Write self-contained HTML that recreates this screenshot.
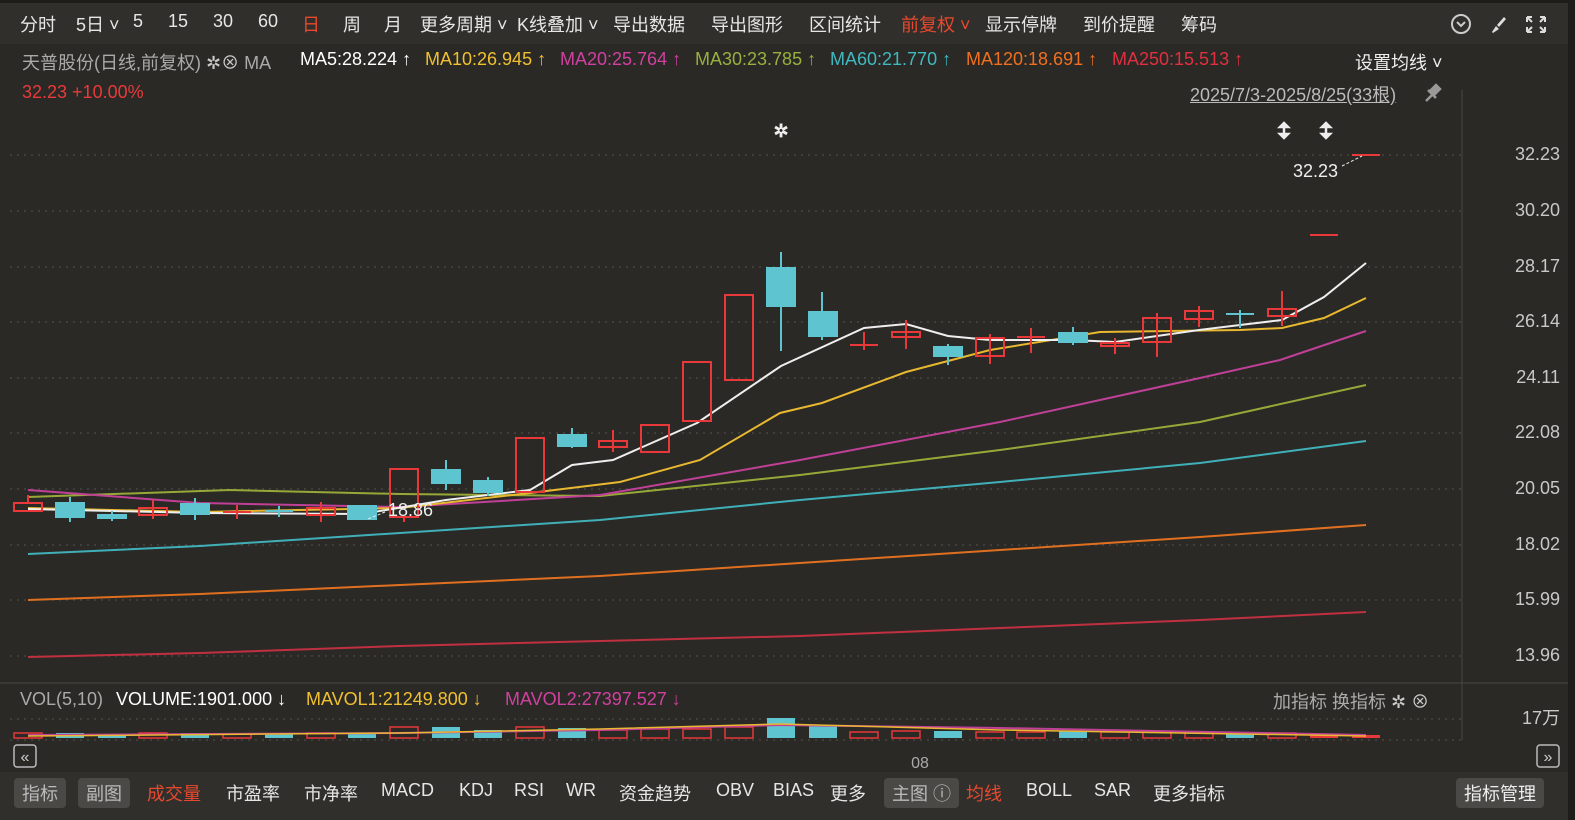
<!DOCTYPE html>
<html><head><meta charset="utf-8">
<style>
*{margin:0;padding:0;box-sizing:border-box}
body{width:1575px;height:820px;background:#2a2925;overflow:hidden;font-family:"Liberation Sans","Noto Sans CJK SC",sans-serif;position:relative;color:#ddd}
.top{position:absolute;left:0;top:0;width:1568px;height:44px;background:#302f2b;border-top:3px solid #1e1d1a}
.top span{position:absolute;top:8px;font-size:18px;color:#e6e6e6;white-space:nowrap}
.t{position:absolute;white-space:nowrap;font-size:18px}
.bot{position:absolute;left:0;top:772px;width:1568px;height:48px;background:#302f2b}
.bot span{position:absolute;top:8px;font-size:18px;color:#e6e6e6;white-space:nowrap}
.btn{background:#4a4945;border-radius:4px;padding:2px 8px;color:#bbb!important}
.rb{position:absolute;right:0;top:0;width:7px;height:820px;background:#1e1d1a}
</style></head><body>
<div class="top">
<span style="left:20px">分时</span><span style="left:76px">5日 ˅</span><span style="left:133px">5</span><span style="left:168px">15</span><span style="left:213px">30</span><span style="left:258px">60</span><span style="left:302px;color:#e8492e">日</span><span style="left:343px">周</span><span style="left:384px">月</span><span style="left:420px">更多周期 ˅</span><span style="left:517px">K线叠加 ˅</span><span style="left:613px">导出数据</span><span style="left:711px">导出图形</span><span style="left:809px">区间统计</span><span style="left:901px;color:#e8492e">前复权 ˅</span><span style="left:985px">显示停牌</span><span style="left:1083px">到价提醒</span><span style="left:1181px">筹码</span>
<svg style="position:absolute;left:1450px;top:9px" width="100" height="24"><circle cx="11" cy="12" r="9" stroke="#ccc" stroke-width="2" fill="none"/><path d="M7 10l4 4 4-4" stroke="#ccc" stroke-width="2" fill="none"/><path d="M42 20l4-6 3 3-6 4z M47 13l7-8 2 2-7 8z" fill="#ddd"/><path d="M77 5h5M77 5v5M95 5h-5M95 5v5M77 20h5M77 20v-5M95 20h-5M95 20v-5M78 6l4 4M94 6l-4 4M78 19l4-4M94 19l-4-4" stroke="#ddd" stroke-width="2"/></svg>
</div>
<div class="t" style="left:22px;top:49px;color:#aaa">天普股份(日线,前复权) <span style="color:#ccc">✲⊗</span> MA</div>
<div class="t" style="left:300px;top:49px;color:#fff">MA5:28.224 ↑</div>
<div class="t" style="left:425px;top:49px;color:#f0c030">MA10:26.945 ↑</div>
<div class="t" style="left:560px;top:49px;color:#d040a0">MA20:25.764 ↑</div>
<div class="t" style="left:695px;top:49px;color:#98b040">MA30:23.785 ↑</div>
<div class="t" style="left:830px;top:49px;color:#40b8c0">MA60:21.770 ↑</div>
<div class="t" style="left:966px;top:49px;color:#f07020">MA120:18.691 ↑</div>
<div class="t" style="left:1112px;top:49px;color:#e03040">MA250:15.513 ↑</div>
<div class="t" style="left:1355px;top:49px;color:#eee">设置均线 ˅</div>
<div class="t" style="left:22px;top:82px;color:#e83a3a">32.23 +10.00%</div>
<div class="t" style="left:1190px;top:81px;color:#bbb;text-decoration:underline">2025/7/3-2025/8/25(33根)</div>
<svg style="position:absolute;left:1422px;top:83px" width="20" height="20"><path d="M4 18l6-6M8 8l6-6 4 4-6 6z M6 7l8 8" stroke="#999" stroke-width="2.5" fill="#999"/></svg>
<svg style="position:absolute;left:0;top:0" width="1575" height="820">
<g stroke="#55544e" stroke-dasharray="2 5" stroke-width="1">
<line x1="10" y1="155" x2="1462" y2="155"/><line x1="10" y1="211" x2="1462" y2="211"/><line x1="10" y1="267" x2="1462" y2="267"/><line x1="10" y1="322" x2="1462" y2="322"/><line x1="10" y1="378" x2="1462" y2="378"/><line x1="10" y1="433" x2="1462" y2="433"/><line x1="10" y1="489" x2="1462" y2="489"/><line x1="10" y1="545" x2="1462" y2="545"/><line x1="10" y1="600" x2="1462" y2="600"/><line x1="10" y1="656" x2="1462" y2="656"/>
<line x1="10" y1="719" x2="1462" y2="719"/><line x1="10" y1="740" x2="1462" y2="740"/>
</g>
<line x1="1462" y1="90" x2="1462" y2="740" stroke="#48473f"/>
<line x1="0" y1="683" x2="1568" y2="683" stroke="#48473f"/>
<g font-size="18" fill="#c8c8c8" text-anchor="end"><text x="1560" y="160">32.23</text><text x="1560" y="216">30.20</text><text x="1560" y="272">28.17</text><text x="1560" y="327">26.14</text><text x="1560" y="383">24.11</text><text x="1560" y="438">22.08</text><text x="1560" y="494">20.05</text><text x="1560" y="550">18.02</text><text x="1560" y="605">15.99</text><text x="1560" y="661">13.96</text><text x="1560" y="724">17万</text></g>
<g fill="none" stroke-width="2">
<polyline stroke="#c03040" points="28,657 200,653 400,646 600,641 800,636 1000,628 1200,620 1366,612"/>
<polyline stroke="#e07020" points="28,600 200,594 400,585 600,576 800,563 1000,550 1200,537 1366,525"/>
<polyline stroke="#40b0b8" points="28,554 200,546 400,533 600,520 800,500 1000,482 1200,463 1366,441"/>
<polyline stroke="#98a838" points="28,497 230,490 400,494 600,496 800,475 1000,450 1200,422 1366,385"/>
<polyline stroke="#c04098" points="28,490 200,503 400,507 600,495 800,460 1000,422 1200,378 1280,360 1366,331"/>
<polyline stroke="#e8b830" points="28,508 200,512 400,508 530,493 620,482 700,460 780,413 822,403 906,372 990,350 1100,332 1240,330 1282,328 1324,318 1366,298"/>
<polyline stroke="#eeeeee" points="28,509 200,513 362,514 446,500 530,490 572,465 613,460 697,423 781,366 864,328 906,324 948,336 990,340 1073,340 1115,342 1199,330 1240,325 1282,320 1324,297 1366,263"/>
</g>
<g stroke="#e8383a" stroke-width="2" fill="none">
<rect x="14" y="503" width="28" height="8"/><line x1="28" y1="495" x2="28" y2="503"/>
<rect x="139" y="508" width="28" height="7"/><line x1="153" y1="500" x2="153" y2="519"/>
<line x1="223" y1="512" x2="251" y2="512"/><line x1="237" y1="505" x2="237" y2="519"/>
<rect x="307" y="508" width="28" height="7"/><line x1="321" y1="502" x2="321" y2="522"/>
<rect x="390" y="469" width="28" height="48"/><line x1="404" y1="517" x2="404" y2="522"/>
<rect x="516" y="438" width="28" height="54"/>
<rect x="599" y="441" width="28" height="6"/><line x1="613" y1="430" x2="613" y2="452"/>
<rect x="641" y="425" width="28" height="27"/>
<rect x="683" y="362" width="28" height="59"/>
<rect x="725" y="295" width="28" height="85"/>
<line x1="850" y1="345" x2="878" y2="345"/><line x1="864" y1="332" x2="864" y2="350"/>
<rect x="892" y="332" width="28" height="5"/><line x1="906" y1="320" x2="906" y2="349"/>
<rect x="976" y="338" width="28" height="18"/><line x1="990" y1="334" x2="990" y2="364"/>
<line x1="1017" y1="337" x2="1045" y2="337"/><line x1="1031" y1="328" x2="1031" y2="353"/>
<rect x="1101" y="343" width="28" height="3"/><line x1="1115" y1="338" x2="1115" y2="354"/>
<rect x="1143" y="318" width="28" height="24"/><line x1="1157" y1="313" x2="1157" y2="357"/>
<rect x="1185" y="311" width="28" height="8"/><line x1="1199" y1="306" x2="1199" y2="327"/>
<rect x="1268" y="309" width="28" height="7"/><line x1="1282" y1="291" x2="1282" y2="326"/>
<line x1="1310" y1="235" x2="1338" y2="235"/><line x1="1352" y1="155" x2="1380" y2="155"/>
</g>
<g fill="#5ec4d0" stroke="#5ec4d0" stroke-width="2">
<rect x="56" y="503" width="28" height="14"/><line x1="70" y1="497" x2="70" y2="522"/>
<rect x="98" y="515" width="28" height="3"/><line x1="112" y1="511" x2="112" y2="521"/>
<rect x="181" y="504" width="28" height="10"/><line x1="195" y1="498" x2="195" y2="520"/>
<line x1="265" y1="511" x2="293" y2="511"/><line x1="279" y1="506" x2="279" y2="517"/>
<rect x="348" y="506" width="28" height="13"/>
<rect x="432" y="470" width="28" height="13"/><line x1="446" y1="460" x2="446" y2="490"/>
<rect x="474" y="481" width="28" height="11"/><line x1="488" y1="477" x2="488" y2="496"/>
<rect x="558" y="435" width="28" height="11"/><line x1="572" y1="428" x2="572" y2="448"/>
<rect x="767" y="268" width="28" height="38"/><line x1="781" y1="252" x2="781" y2="351"/>
<rect x="809" y="312" width="28" height="24"/><line x1="822" y1="292" x2="822" y2="340"/>
<rect x="934" y="347" width="28" height="9"/><line x1="948" y1="344" x2="948" y2="365"/>
<rect x="1059" y="333" width="28" height="9"/><line x1="1073" y1="327" x2="1073" y2="345"/>
<line x1="1226" y1="314" x2="1254" y2="314"/><line x1="1240" y1="310" x2="1240" y2="328"/>
</g>
<text x="388" y="516" font-size="18" fill="#eee">18.86</text>
<path d="M385 512 L368 519" stroke="#eee" stroke-dasharray="3 2"/>
<text x="1293" y="177" font-size="18" fill="#eee">32.23</text>
<path d="M1342 166 L1362 156" stroke="#eee" stroke-dasharray="3 2"/>
<text x="781" y="137" font-size="18" font-weight="bold" fill="#eee" text-anchor="middle">✲</text>
<g stroke="#eee" stroke-width="2.5" fill="#eee"><line x1="1284" y1="125" x2="1284" y2="136"/><path d="M1280 127l4-4 4 4zM1280 134l4 4 4-4z"/><line x1="1326" y1="125" x2="1326" y2="136"/><path d="M1322 127l4-4 4 4zM1322 134l4 4 4-4z"/></g>
<g stroke="#e8383a" stroke-width="1.5" fill="none">
<rect x="14" y="733" width="28" height="5"/><rect x="139" y="733" width="28" height="5"/><rect x="223" y="734" width="28" height="4"/><rect x="307" y="733" width="28" height="5"/><rect x="390" y="727" width="28" height="11"/><rect x="516" y="727" width="28" height="11"/><rect x="599" y="730" width="28" height="8"/><rect x="641" y="729" width="28" height="9"/><rect x="683" y="729" width="28" height="9"/><rect x="725" y="727" width="28" height="11"/><rect x="850" y="732" width="28" height="6"/><rect x="892" y="731" width="28" height="7"/><rect x="976" y="732" width="28" height="6"/><rect x="1017" y="732" width="28" height="6"/><rect x="1101" y="732" width="28" height="6"/><rect x="1143" y="732" width="28" height="6"/><rect x="1185" y="732" width="28" height="6"/><rect x="1268" y="733" width="28" height="5"/>
</g>
<g fill="#e8383a"><rect x="1310" y="734" width="28" height="4"/><rect x="1352" y="735" width="28" height="3"/></g>
<g fill="#5ec4d0"><rect x="56" y="733" width="28" height="5"/><rect x="98" y="734" width="28" height="4"/><rect x="181" y="733" width="28" height="5"/><rect x="265" y="734" width="28" height="4"/><rect x="348" y="733" width="28" height="5"/><rect x="432" y="727" width="28" height="11"/><rect x="474" y="730" width="28" height="8"/><rect x="558" y="728" width="28" height="10"/><rect x="767" y="718" width="28" height="20"/><rect x="809" y="725" width="28" height="13"/><rect x="934" y="731" width="28" height="7"/><rect x="1059" y="731" width="28" height="7"/><rect x="1226" y="732" width="28" height="6"/></g>
<polyline fill="none" stroke="#c04098" stroke-width="2" points="28,735 400,733 600,730 780,725 1000,728 1366,735"/>
<polyline fill="none" stroke="#e8b830" stroke-width="1.5" points="28,736 400,733 600,729 780,724 1000,730 1366,736"/>
<rect x="14" y="745" width="22" height="22" rx="3" fill="none" stroke="#bbb" stroke-width="1.5"/><text x="25" y="762" font-size="16" fill="#ccc" text-anchor="middle">«</text>
<rect x="1537" y="745" width="22" height="22" rx="3" fill="none" stroke="#bbb" stroke-width="1.5"/><text x="1548" y="762" font-size="16" fill="#ccc" text-anchor="middle">»</text>
<text x="920" y="768" font-size="16" fill="#aaa" text-anchor="middle">08</text>
</svg>
<div class="t" style="left:20px;top:689px;color:#aaa">VOL(5,10)</div>
<div class="t" style="left:116px;top:689px;color:#fff">VOLUME:1901.000 ↓</div>
<div class="t" style="left:306px;top:689px;color:#f0c030">MAVOL1:21249.800 ↓</div>
<div class="t" style="left:505px;top:689px;color:#d040a0">MAVOL2:27397.527 ↓</div>
<div class="t" style="left:1273px;top:688px;color:#aaa">加指标 换指标 <span style="color:#ccc">✲ ⊗</span></div>
<div class="bot">
<span class="btn" style="left:14px;top:6px">指标</span><span class="btn" style="left:78px;top:6px">副图</span><span style="left:147px;color:#e8492e">成交量</span><span style="left:226px">市盈率</span><span style="left:304px">市净率</span><span style="left:381px">MACD</span><span style="left:459px">KDJ</span><span style="left:514px">RSI</span><span style="left:566px">WR</span><span style="left:619px">资金趋势</span><span style="left:716px">OBV</span><span style="left:773px">BIAS</span><span style="left:830px">更多</span><span class="btn" style="left:884px;top:6px">主图 ⓘ</span><span style="left:966px;color:#e8492e">均线</span><span style="left:1026px">BOLL</span><span style="left:1094px">SAR</span><span style="left:1153px">更多指标</span><span class="btn" style="left:1456px;top:6px;color:#eee!important">指标管理</span>
</div>
<div class="rb"></div>
</body></html>
